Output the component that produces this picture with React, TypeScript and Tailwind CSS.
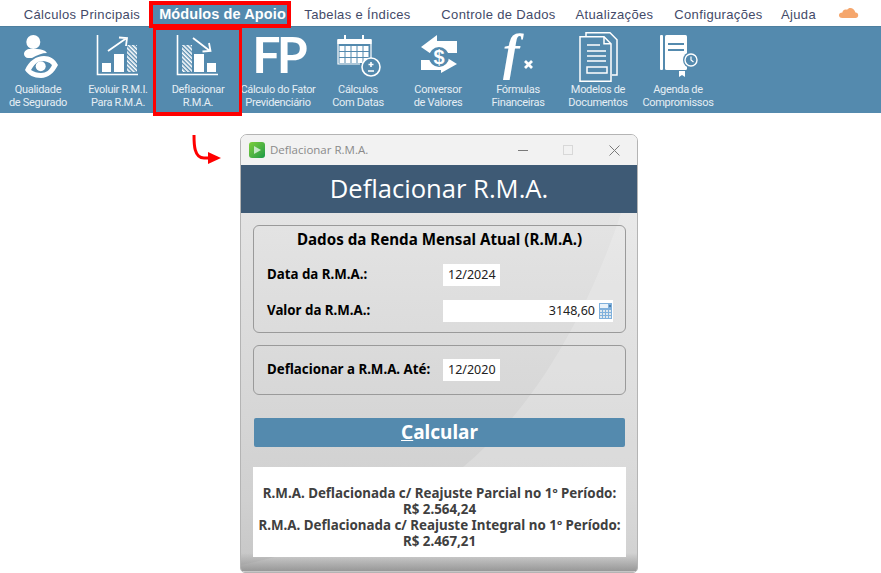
const menu = [
  { label: "Cálculos Principais", w: "w-[134px] ml-[15px]" },
  { label: "Módulos de Apoio", active: true },
  { label: "Tabelas e Índices", w: "w-[133px]" },
  { label: "Controle de Dados", w: "w-[149px]" },
  { label: "Atualizações", w: "w-[83px]" },
  { label: "Configurações", w: "w-[125px]" },
  { label: "Ajuda", w: "w-[35px]" },
];

function IconSegurado() {
  return (
    <svg width="44" height="48" viewBox="0 0 44 48" fill="white">
      <circle cx="17.300" cy="9" r="7" />
      <path d="M8 21c0-3 3-5 6-5h7c4 0 8 1 10 4-5 0-10 2-15 5h-4c-2 0-4-2-4-4z" />
      <path fillRule="evenodd" d="M9 37C13 28 20 23 28 23c6 0 11 3 14 9-4 8-10 13-17 13-7 0-13-3-16-8zm6 0c3 2 6 3 10 3 5 0 9-3 11-8-3-3-6-4-10-4-5 0-8 4-11 9z" />
      <circle cx="24.700" cy="33.300" r="5" />
    </svg>
  );
}

function Hatch({ x, y, h, id }: { x: number; y: number; h: number; id: string }) {
  return (
    <>
      <pattern id={id} width="3" height="3" patternUnits="userSpaceOnUse" patternTransform="rotate(-45)">
        <rect width="1.600" height="3" fill="white" />
      </pattern>
      <rect x={x} y={y} width="10" height={h} fill={`url(#${id})`} />
    </>
  );
}

function IconEvoluir() {
  return (
    <svg width="44" height="44" viewBox="0 0 44 44" fill="none">
      <path d="M1.500 0v39.500H42" stroke="white" strokeWidth="1.600" />
      <rect x="6" y="28" width="9" height="9" fill="white" />
      <rect x="18" y="19" width="10" height="18" fill="white" />
      <Hatch x={31} y={10} h={27} id="h1" />
      <path d="M12 16 30 3.500M23 2.500l8 .5-1 8" stroke="white" strokeWidth="1.800" />
    </svg>
  );
}

function IconDeflacionar() {
  return (
    <svg width="44" height="44" viewBox="0 0 44 44" fill="none">
      <path d="M1.500 0v39.500H42" stroke="white" strokeWidth="1.600" />
      <Hatch x={6} y={10} h={27} id="h2" />
      <rect x="18" y="19" width="10" height="18" fill="white" />
      <rect x="31" y="28" width="9" height="9" fill="white" />
      <path d="M17 3 34 16M33 8l1.500 8-8 .5" stroke="white" strokeWidth="1.800" />
    </svg>
  );
}

function IconFP() {
  return (
    <span className="mt-[-7px] block font-['Lato',sans-serif] text-[50px] leading-[40px] font-bold tracking-[-4px] text-white">
      FP
    </span>
  );
}

function IconCalendar() {
  const cells = [];
  for (let r = 0; r < 3; r++) {
    for (let c = 0; c < 5; c++) {
      cells.push(<rect key={`${r}-${c}`} x={4.500 + c * 6} y={11 + r * 6} width="5" height="5" fill="white" />);
    }
  }
  return (
    <svg width="46" height="44" viewBox="0 0 46 44" fill="none">
      <path d="M3 4.500h33v4H3z" fill="white" stroke="white" strokeWidth="1.200" />
      <path d="M3 5v24h22M36 5v18" stroke="white" strokeWidth="1.200" />
      <path d="M10 0v5M28 0v5" stroke="white" strokeWidth="2" />
      {cells}
      <circle cx="36" cy="32" r="9" fill="#548aae" stroke="white" strokeWidth="1.600" />
      <path d="M36 27v5M33.500 29.500h5M33 36h6" stroke="white" strokeWidth="1.600" />
    </svg>
  );
}

function IconConversor() {
  return (
    <div className="relative h-[44px] w-[38px]">
      <svg width="38" height="44" viewBox="0 0 38 44" fill="white">
        <path d="M2 12 18 0v6h20v12H18v5z" />
        <path d="M38 29 22 38v-3H2V25h20v-6z" />
        <circle cx="20" cy="22" r="10" fill="#548aae" />
      </svg>
      <span className="absolute top-0 left-[2px] flex h-[44px] w-[36px] items-center justify-center font-['Liberation_Sans',sans-serif] text-[20px] leading-none font-bold text-white">
        $
      </span>
    </div>
  );
}

function IconFormula() {
  return (
    <div className="relative h-[44px] w-[32px]">
      <span className="absolute top-[-8px] left-[1px] font-['Liberation_Serif',serif] text-[50px] leading-none font-bold text-white italic">
        f
      </span>
      <svg className="absolute top-[25px] left-[22px]" width="9" height="9" viewBox="0 0 9 9">
        <path d="M1 1l7 7M8 1 1 8" stroke="white" strokeWidth="2.800" />
      </svg>
    </div>
  );
}

function IconDocs() {
  return (
    <svg width="40" height="50" viewBox="0 0 40 50" fill="none" stroke="white" strokeWidth="1.500">
      <path d="M8 4V.750h24l7 7V43h-5" />
      <path d="M2 4.750h24l7 7v37.500H2z" fill="#548aae" />
      <path d="M26 4.750v7h7" />
      <path d="M9 13h13M9 19h19M9 24h19M9 29h19" />
      <rect x="9" y="35" width="20" height="6" />
    </svg>
  );
}

function IconAgenda() {
  return (
    <svg width="42" height="44" viewBox="0 0 42 44" fill="white">
      <rect x="3" y="0" width="3" height="35" rx="1" />
      <rect x="8" y="0" width="22" height="35" rx="1.500" />
      <path d="M22 36h6v6l-3-2-3 2z" />
      <rect x="11" y="8" width="16" height="2" fill="#548aae" />
      <rect x="11" y="14" width="16" height="2" fill="#548aae" />
      <circle cx="34" cy="25" r="8" fill="#548aae" />
      <circle cx="34" cy="25" r="6" fill="none" stroke="white" strokeWidth="1.400" />
      <path d="M34 21.500V25l2.500 2" fill="none" stroke="white" strokeWidth="1.200" />
    </svg>
  );
}

const tools = [
  { icon: <IconSegurado />, lines: ["Qualidade", "de Segurado"] },
  { icon: <IconEvoluir />, lines: ["Evoluir R.M.I.", "Para R.M.A."] },
  { icon: <IconDeflacionar />, lines: ["Deflacionar", "R.M.A."] },
  { icon: <IconFP />, lines: ["Cálculo do Fator", "Previdenciário"] },
  { icon: <IconCalendar />, lines: ["Cálculos", "Com Datas"] },
  { icon: <IconConversor />, lines: ["Conversor", "de Valores"] },
  { icon: <IconFormula />, lines: ["Fórmulas", "Financeiras"] },
  { icon: <IconDocs />, lines: ["Modelos de", "Documentos"] },
  { icon: <IconAgenda />, lines: ["Agenda de", "Compromissos"] },
];

function CalcIcon() {
  return (
    <svg width="13" height="16" viewBox="0 0 13 16" className="block">
      <rect width="13" height="16" fill="#7fb0dc" />
      <rect x="1" y="1" width="8" height="4" fill="#e8f2fa" />
      <circle cx="11" cy="3" r="1" fill="#3d6f9c" />
      {[0, 1, 2].map((r) =>
        [0, 1, 2, 3].map((c) => <rect key={`${r}${c}`} x={1 + c * 3} y={7 + r * 3} width="2" height="2" fill="#dfe8ee" />),
      )}
    </svg>
  );
}

export default function App() {
  return (
    <div className="relative h-[573px] w-[881px] overflow-hidden bg-white font-['Liberation_Sans',sans-serif]">
      <nav className="relative z-10 flex h-[26px] items-center pt-[4px] whitespace-nowrap">
        {menu.map((m) =>
          m.active ? (
            <div
              key={m.label}
              className="mt-[-3px] h-[27px] w-[142px] shrink-0 self-start border-[4px] border-[#ff0000] bg-[#548aae] pl-[5px] text-center text-[14.500px] leading-[19px] font-bold tracking-[0.1px] text-white"
            >
              {m.label}
            </div>
          ) : (
            <div key={m.label} className={`${m.w} shrink-0 text-center text-[13px] tracking-[0.35px] text-[#434a68]`}>
              {m.label}
            </div>
          ),
        )}
        <svg width="22" height="13" viewBox="0 0 22 14" className="mt-[-6px] ml-[21px]">
          <path d="M5 13h14c4 0 4-6 0-6-1-4-6-7-9-3-3-1-5 1-5 3-5 0-5 6 0 6z" fill="#f5a66c" />
        </svg>
      </nav>

      <div className="flex h-[87px] border-t border-[#4d7f9f] bg-[#548aae]">
        <div className="ml-[-2px] flex">
          {tools.map((t) => (
            <div key={t.lines[0]} className="flex w-[80px] flex-col items-center">
              <div className="flex h-[56px] items-center justify-center pt-[4px]">{t.icon}</div>
              <div className="text-center font-['Roboto',sans-serif] text-[11px] leading-[13px] tracking-[-0.3px] whitespace-nowrap text-[#e6eef4]">
                {t.lines.map((l) => (
                  <div key={l}>{l}</div>
                ))}
              </div>
            </div>
          ))}
        </div>
      </div>

      {/* destaques vermelhos do tutorial */}
      <div className="absolute top-[27px] left-[153px] h-[89px] w-[89px] border-[3px] border-b-[4px] border-[#ff0000]" />
      <svg className="absolute top-[134px] left-[190px]" width="34" height="34" viewBox="0 0 34 34" fill="none">
        <path d="M4 1C4 10 4 24 14 24h6" stroke="#ff0000" strokeWidth="3" />
        <path d="M18 18l13 6-13 6z" fill="#ff0000" />
      </svg>

      <div className="mt-[21px] ml-[240px] flex h-[439px] w-[398px] flex-col overflow-hidden rounded-t-[7px] rounded-b-[5px] border border-[#b4b4b4]">
        <div className="flex h-[30px] shrink-0 items-center bg-[#f2f2f2] pl-[8px]">
          <div className="flex h-[16px] w-[16px] items-center justify-center rounded-[3px] bg-gradient-to-br from-[#7ccf3a] to-[#0e9a46]">
            <div className="h-0 w-0 border-y-[4px] border-l-[7px] border-y-transparent border-l-[#c8e8c8]" />
          </div>
          <span className="ml-[5px] font-['Open_Sans',sans-serif] text-[11.500px] text-[#8a8a8a]">Deflacionar R.M.A.</span>
          <div className="ml-auto flex items-center">
            <div className="h-px w-[10px] bg-[#7a7a7a]" />
            <div className="ml-[35px] h-[10px] w-[10px] border border-[#d8d8d8]" />
            <svg width="11" height="11" viewBox="0 0 11 11" className="mr-[17px] ml-[36px]">
              <path d="M.500.500l10 10M10.500.500l-10 10" stroke="#7a7a7a" strokeWidth="1" />
            </svg>
          </div>
        </div>
        <div className="flex h-[48px] shrink-0 items-center justify-center bg-[#3e5a75] font-['Open_Sans',sans-serif] text-[25.600px] text-white">
          Deflacionar R.M.A.
        </div>

        <div className="relative flex-1 bg-gradient-to-b from-[#e4e4e4] via-[#d0d0d0] via-80% to-[#c6c6c6] pt-[12px] pr-[11px] pl-[12px] font-['Noto_Sans',sans-serif]">
          {/* brilho curvo do fundo */}
          <svg className="absolute inset-0" width="396" height="358" viewBox="0 0 396 358">
            <path d="M380 0C350 90 300 190 222 254 150 310 60 340 0 352V358H396V0z" fill="#ffffff" fillOpacity="0.18" />
            <rect y="340" width="396" height="18" fill="url(#sombra)" />
            <defs>
              <linearGradient id="sombra" x1="0" y1="0" x2="0" y2="1">
                <stop offset="0" stopColor="#808080" stopOpacity="0" />
                <stop offset="1" stopColor="#808080" stopOpacity="0.7" />
              </linearGradient>
            </defs>
          </svg>

          <div className="relative flex h-[108px] flex-col rounded-[6px] border border-[#9a9a9a] px-[13px]">
            <div className="mt-[3px] text-center text-[15.150px] leading-[20px] font-bold text-black">
              Dados da Renda Mensal Atual (R.M.A.)
            </div>
            <div className="mt-[15px] flex h-[22px] items-center">
              <span className="w-[176px] shrink-0 text-[13.300px] font-bold text-black">Data da R.M.A.:</span>
              <div className="flex h-[22px] w-[57px] items-center bg-white pl-[5px] text-[12.500px] text-[#222]">12/2024</div>
            </div>
            <div className="mt-[14px] flex h-[22px] items-center">
              <span className="w-[176px] shrink-0 text-[13.300px] font-bold text-black">Valor da R.M.A.:</span>
              <div className="flex h-[22px] w-[170px] shrink-0 items-center justify-end bg-white pr-[1px] text-[12.500px] text-[#222]">
                3148,60
                <span className="ml-[4px]">
                  <CalcIcon />
                </span>
              </div>
            </div>
          </div>

          <div className="relative mt-[12px] flex h-[50px] items-center rounded-[6px] border border-[#9a9a9a] pl-[13px]">
            <span className="w-[176px] shrink-0 text-[13.300px] font-bold text-black">Deflacionar a R.M.A. Até:</span>
            <div className="flex h-[22px] w-[57px] items-center bg-white pl-[5px] text-[12.500px] text-[#222]">12/2020</div>
          </div>

          <button className="relative mx-px mt-[23px] flex h-[29px] w-[371px] items-center justify-center rounded-[2px] bg-[#548aae] text-[19px] font-bold text-white">
            <span>
              <span className="underline">C</span>alcular
            </span>
          </button>

          <div className="relative mt-[20px] flex h-[90px] flex-col justify-center bg-white pt-[10px] text-center text-[13.350px] leading-[16px] font-bold text-[#404040]">
            <div>R.M.A. Deflacionada c/ Reajuste Parcial no 1º Período:</div>
            <div>R$ 2.564,24</div>
            <div>R.M.A. Deflacionada c/ Reajuste Integral no 1º Período:</div>
            <div>R$ 2.467,21</div>
          </div>
        </div>
      </div>
    </div>
  );
}
